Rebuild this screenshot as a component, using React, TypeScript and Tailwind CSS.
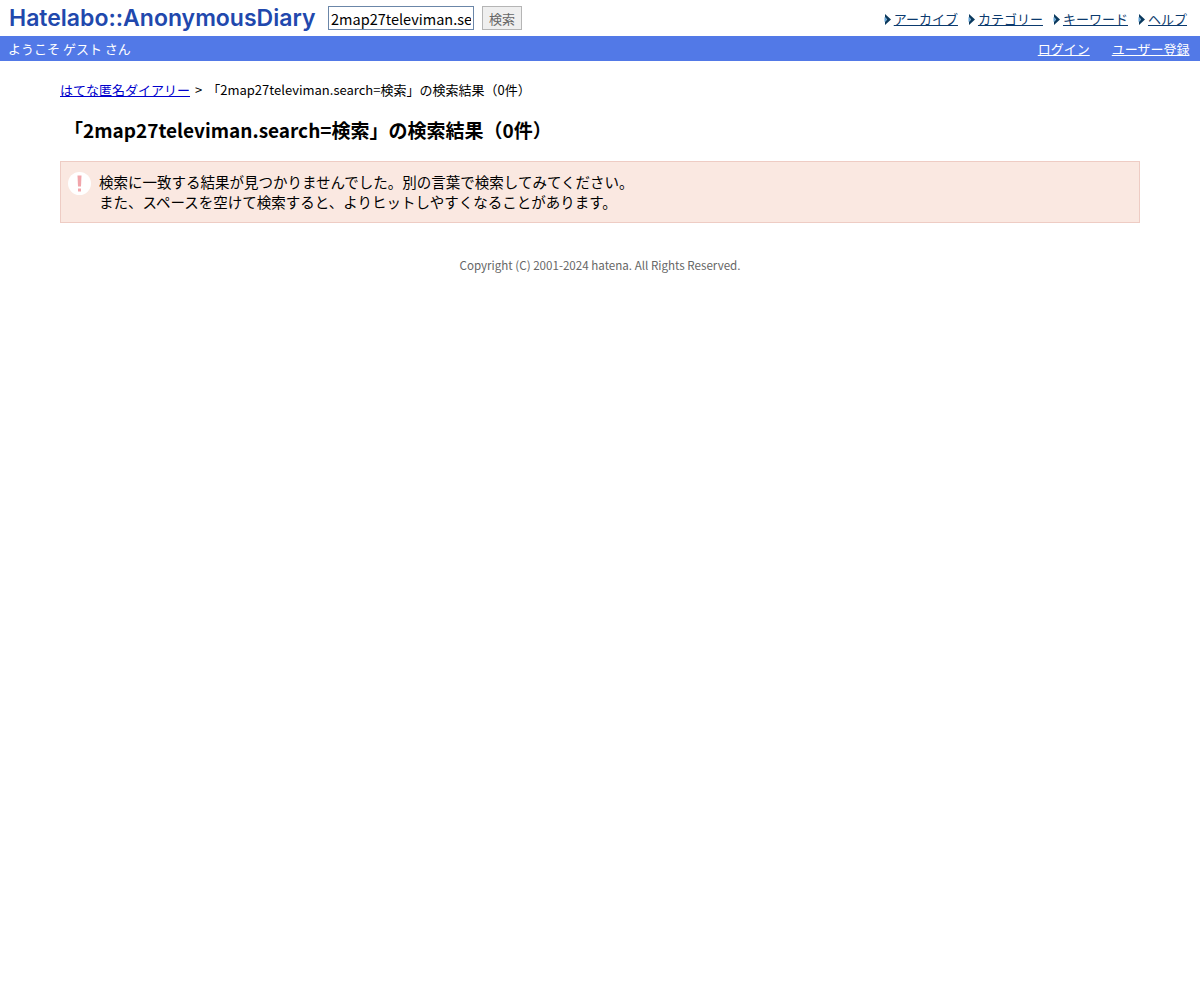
const CJK = "font-['Noto_Sans_CJK_JP',sans-serif]";

const navLinks = ['アーカイブ', 'カテゴリー', 'キーワード', 'ヘルプ'];

const Arrow = () => (
  <svg width="7" height="11" viewBox="0 0 7 11" className="mr-[3px] shrink-0">
    <path d="M1 0 L7 5.5 L1 11 L1 7.8 L3.2 5.5 L1 3.2 Z" fill="#0b3a5e" />
    <path d="M0.5 3 L3 5.5 L0.5 8 Z" fill="#5aa0d8" />
  </svg>
);

export default function App() {
  return (
    <div className={`${CJK} min-h-[1000px] bg-white text-black`}>
      <header className="h-[36px] flex items-center justify-between pl-[9px] pr-[13px]">
        <div className="flex items-center">
          <h1 className="w-[306px] whitespace-nowrap font-['Inter',sans-serif] font-semibold text-[23px] leading-[36px] text-[#2148ad]">
            Hatelabo::AnonymousDiary
          </h1>
          <input
            readOnly
            value="2map27televiman.search=検索"
            className="ml-[13px] w-[146px] h-[24px] px-[2px] border border-[#6b86a8] text-[14.5px] text-black outline-none"
          />
          <button className="ml-[8px] w-[40px] h-[24px] border border-[#b5b5b5] bg-[#efefef] text-[13px] leading-none text-[#666]">
            検索
          </button>
        </div>
        <nav className="flex items-center gap-[10px] pt-[2px] text-[13px] leading-[18px]">
          {navLinks.map((name) => (
            <div key={name} className="flex items-center">
              <Arrow />
              <a href="#" className="text-[#0b3a6e] underline">{name}</a>
            </div>
          ))}
        </nav>
      </header>

      <div className="h-[25px] bg-[#5279e7] flex items-center justify-between pl-[8px] pr-[10.5px] text-[13px] text-white">
        <span>ようこそ ゲスト さん</span>
        <div className="flex gap-[22px]">
          <a href="#" className="underline">ログイン</a>
          <a href="#" className="underline">ユーザー登録</a>
        </div>
      </div>

      <main className="mx-[60px] pt-[19px]">
        <div className="text-[13px] leading-[20px]">
          <a href="#" className="text-[#0000cc] underline">はてな匿名ダイアリー</a>
          <span className="ml-[5px]">&gt;</span>
          <span className="ml-[5px]">「2map27televiman.search=検索」の検索結果（0件）</span>
        </div>

        <h2 className="mt-[15px] ml-[4px] text-[19px] leading-[30px] font-bold">
          「2map27televiman.search=検索」の検索結果（0件）
        </h2>

        <div className="mt-[16px] h-[62px] bg-[#fae8e1] border border-[#eeccc4] flex items-start pl-[7px] pt-[10px]">
          <div className="w-[23px] h-[23px] rounded-full bg-white flex items-center justify-center shrink-0">
            <svg width="7" height="17" viewBox="0 0 7 17">
              <path d="M1.5 0.5 H5.5 L5 11.5 H2 Z" fill="#f1a5ab" />
              <path d="M2 13.5 H5 V16.5 H2 Z" fill="#f1a5ab" />
            </svg>
          </div>
          <p className="ml-[8px] text-[14.5px] leading-[19.5px]">
            検索に一致する結果が見つかりませんでした。別の言葉で検索してみてください。
            <br />
            また、スペースを空けて検索すると、よりヒットしやすくなることがあります。
          </p>
        </div>

        <footer className="mt-[32px] text-center text-[11.6px] leading-[20px] text-[#666]">
          Copyright (C) 2001-2024 hatena. All Rights Reserved.
        </footer>
      </main>
    </div>
  );
}
